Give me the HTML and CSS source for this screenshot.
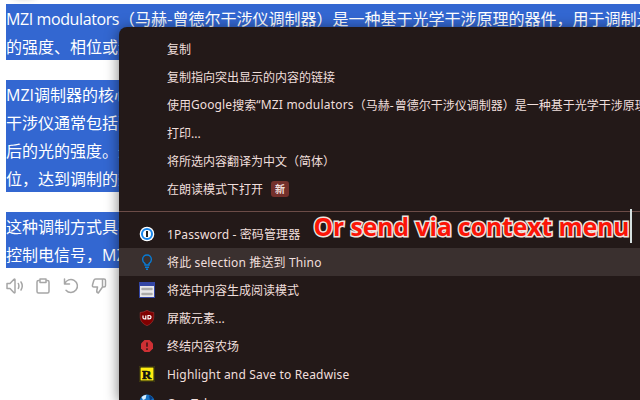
FILE: index.html
```html
<!DOCTYPE html>
<html lang="zh-CN">
<head>
<meta charset="utf-8">
<title>MZI modulators</title>
<link rel="stylesheet" href="styles.css">
</head>
<body>
<main class="article">
  <div class="bubble"></div>
  <p><span class="latin lead">MZI modulators</span>（马赫-曾德尔干涉仪调制器）是一种基于光学干涉原理的器件，用于调制光<br>的强度、相位或频率</p>
  <p><span class="latin">MZI</span>调制器的核心是<br>干涉仪通常包括两<br>后的光的强度。通过<br>位，达到调制的效果</p>
  <p>这种调制方式具有<br>控制电信号，<span class="latin">MZI</span></p>
  <div class="actions">
    <svg viewBox="0 0 18 18"><path d="M1 6.500h3l4-4.200q1-.6 1 .5v12.400q0 1.100-1 .5L4 11.500H1zM12.300 6.500q1.200 2.500 0 5M15 5q2.500 4 0 8"/></svg>
    <svg viewBox="0 0 18 18"><path d="M6 3.500H4.500Q3 3.500 3 5v9.500Q3 16 4.500 16h9q1.500 0 1.500-1.500V5q0-1.500-1.500-1.500H12M6 2h6v3.500H6z"/></svg>
    <svg viewBox="0 0 18 18"><path d="M2.500 2v5h5M2.800 6.800A6.500 6.500 0 1 1 4 13.200"/></svg>
    <svg viewBox="0 0 18 18"><path d="M12.500 2v8M12.500 2H5.800Q4.300 2 3.800 3.500L2.500 8Q2 10 4 10h3.500l-.7 3.500q-.3 2 1.500 2.500l4.200-6H14q1.500 0 1.500-1.500v-5Q15.500 2 14 2z"/></svg>
  </div>
</main>

<div class="menu">
  <div class="item">复制</div>
  <div class="item">复制指向突出显示的内容的链接</div>
  <div class="item">使用<span class="google">Google</span>搜索<span class="query">“MZI modulators</span><span>（马赫<span class="hyphen">-</span>曾德尔干涉仪调制器）是一种基于光学干涉原理</span></div>
  <div class="item">打印...</div>
  <div class="item">将所选内容翻译为中文（简体）</div>
  <div class="item">在朗读模式下打开<span class="badge">新</span></div>
  <hr>
  <div class="item"><svg viewBox="0 0 16 16"><circle cx="8" cy="8" r="7.300" fill="#fff"/><circle cx="8" cy="8" r="5" fill="#fff" stroke="#1686ed" stroke-width="2"/><path d="M8 5v6" stroke="#222" stroke-width="2"/></svg><span class="onepass">1Password - 密码管理器</span></div>
  <div class="item active"><svg viewBox="0 0 16 16" fill="none" stroke="#087bd5" stroke-width="1.400"><path d="M6 11V9.600Q3.600 7.800 3.600 5.400a4.400 4.400 0 0 1 8.800 0Q12.400 7.800 10 9.600V11zM6 13.300h4M7 15.200h2"/></svg><span class="thino">将此 selection 推送到 Thino</span></div>
  <div class="item"><svg viewBox="0 0 16 16"><path fill="#3446a4" d="M0 0h16v16H0z"/><path fill="#e8e8ea" d="M1 4h14v11H1z"/><path d="M3.500 7h9M3.500 12h9" stroke="#aaa" stroke-width="2.500" stroke-linecap="round"/></svg>将选中内容生成阅读模式</div>
  <div class="item"><svg viewBox="0 0 16 16"><path fill="#800000" stroke="#b04040" stroke-width=".5" d="M8 .3q3 2 6.800 2.200v5Q14.500 13 8 15.700 1.500 13 1.200 7.500v-5Q5 2.300 8 .3z"/><path d="M4 5.500v2.200q0 1.200 1.500 1.200h1.300V5.500M9 5.500v3.400h1q2 0 2-1.700t-2-1.700z" fill="none" stroke="#fff" stroke-width="1.200"/></svg>屏蔽元素...</div>
  <div class="item"><svg viewBox="0 0 16 16"><path fill="#cf3034" d="M5.500 2h5L14 5.500v5L10.500 14h-5L2 10.500v-5z"/><path d="M8 4.500v4.300M8 10.300v1.700" stroke="#4a1719" stroke-width="1.700"/></svg>终结内容农场</div>
  <div class="item"><svg viewBox="0 0 16 16"><path fill="#111" stroke="#5c5510" stroke-width=".6" d="M.3.3h15.400v15.400H.3z"/><path fill="#ffed10" d="M1.500 1.500h13v13h-13z"/><text class="r" x="3" y="13">R</text></svg><span class="readwise">Highlight and Save to Readwise</span></div>
  <div class="item"><svg viewBox="0 0 16 16"><circle cx="8" cy="8" r="7.500" fill="#1672c4"/><path fill="#d9f0ff" d="M2.500 3q2-2 5-2.300L6.500 5 4 6z"/><path fill="#073c83" d="M10 1l4 3-3 3z"/></svg><span class="onetab">OneTab</span></div>
</div>

<svg class="caption" viewBox="0 0 330 44"><text x="3.500" y="28" textLength="316" lengthAdjust="spacingAndGlyphs">Or send via context menu</text></svg>
<i class="caret"></i>
</body>
</html>
```
FILE: styles.css
```css
* { box-sizing: border-box; }
html { height: 400px; overflow: hidden; }
body {
  position: relative;
  margin: 0;
  width: 640px;
  height: 400px;
  overflow: hidden;
  background: #fff;
  font-family: "Noto Sans", "Noto Sans CJK SC", sans-serif;
  text-spacing-trim: space-all;
}
.article {
  padding: 4px 0 0 6px;
  font: 16px/28px "Noto Sans CJK SC", sans-serif;
  color: #fff;
  white-space: nowrap;
}
.article p {
  margin: 0 0 20px;
  background: #3367d1;
}
.latin { font-family: "Open Sans", sans-serif; line-height: 1; }
.lead { letter-spacing: -0.4px; }
.bubble {
  position: absolute;
  left: 8px;
  top: -26px;
  width: 32px;
  height: 24px;
  border-radius: 12px;
  box-shadow: 0 0 7px #0004;
}
.actions {
  display: flex;
  gap: 10px;
  margin-top: -12px;
  padding-top: 1px;
}
.actions svg {
  width: 18px;
  height: 18px;
  fill: none;
  stroke: #a6a6a6;
  stroke-width: 1.5;
  stroke-linejoin: round;
  stroke-linecap: round;
}
.menu {
  position: absolute;
  left: 119px;
  top: 27px;
  width: 521px;
  height: 373px;
  padding-top: 8px;
  border-radius: 8px 0 0 0;
  background: #231918;
  box-shadow: 0 2px 14px #0008;
  color: #f0dfdc;
  font-size: 12px;
  white-space: nowrap;
  overflow: hidden;
}
.item {
  display: flex;
  align-items: center;
  height: 28px;
  padding: 0 0 1px 48px;
}
.item svg {
  flex: none;
  width: 16px;
  height: 16px;
  margin: 1px 12px 0 -28px;
}
.google { letter-spacing: 0.1px; }
.query { letter-spacing: 0.2px; }
.hyphen { letter-spacing: 1px; }
.onepass { letter-spacing: 0.12px; }
.thino { letter-spacing: 0.14px; }
.readwise { padding-top: 2px; letter-spacing: 0.17px; }
.onetab { padding-top: 3px; letter-spacing: 0.2px; }
.active { background: #3a302f; }
.menu hr {
  height: 1px;
  margin: 8px 0;
  border: 0;
  background: #6c4c47;
}
.badge {
  width: 18px;
  height: 16px;
  margin-left: 8px;
  border-radius: 3px;
  background: #73302b;
  font-size: 10px;
  font-weight: 700;
  line-height: 16px;
  text-align: center;
}
.r { font: 900 13px "Liberation Serif", serif; fill: #111; stroke: #111; stroke-width: .6px; }
.caption {
  position: absolute;
  left: 310px;
  top: 208px;
  width: 330px;
  height: 44px;
}
.caption text {
  font: 700 25px "Open Sans", sans-serif;
  fill: #fb1507;
  stroke: #eee3df;
  stroke-width: 3px;
  paint-order: stroke;
}
.caret {
  position: absolute;
  left: 630px;
  top: 209px;
  width: 2px;
  height: 34px;
  background: #d5dfdf;
}
```
